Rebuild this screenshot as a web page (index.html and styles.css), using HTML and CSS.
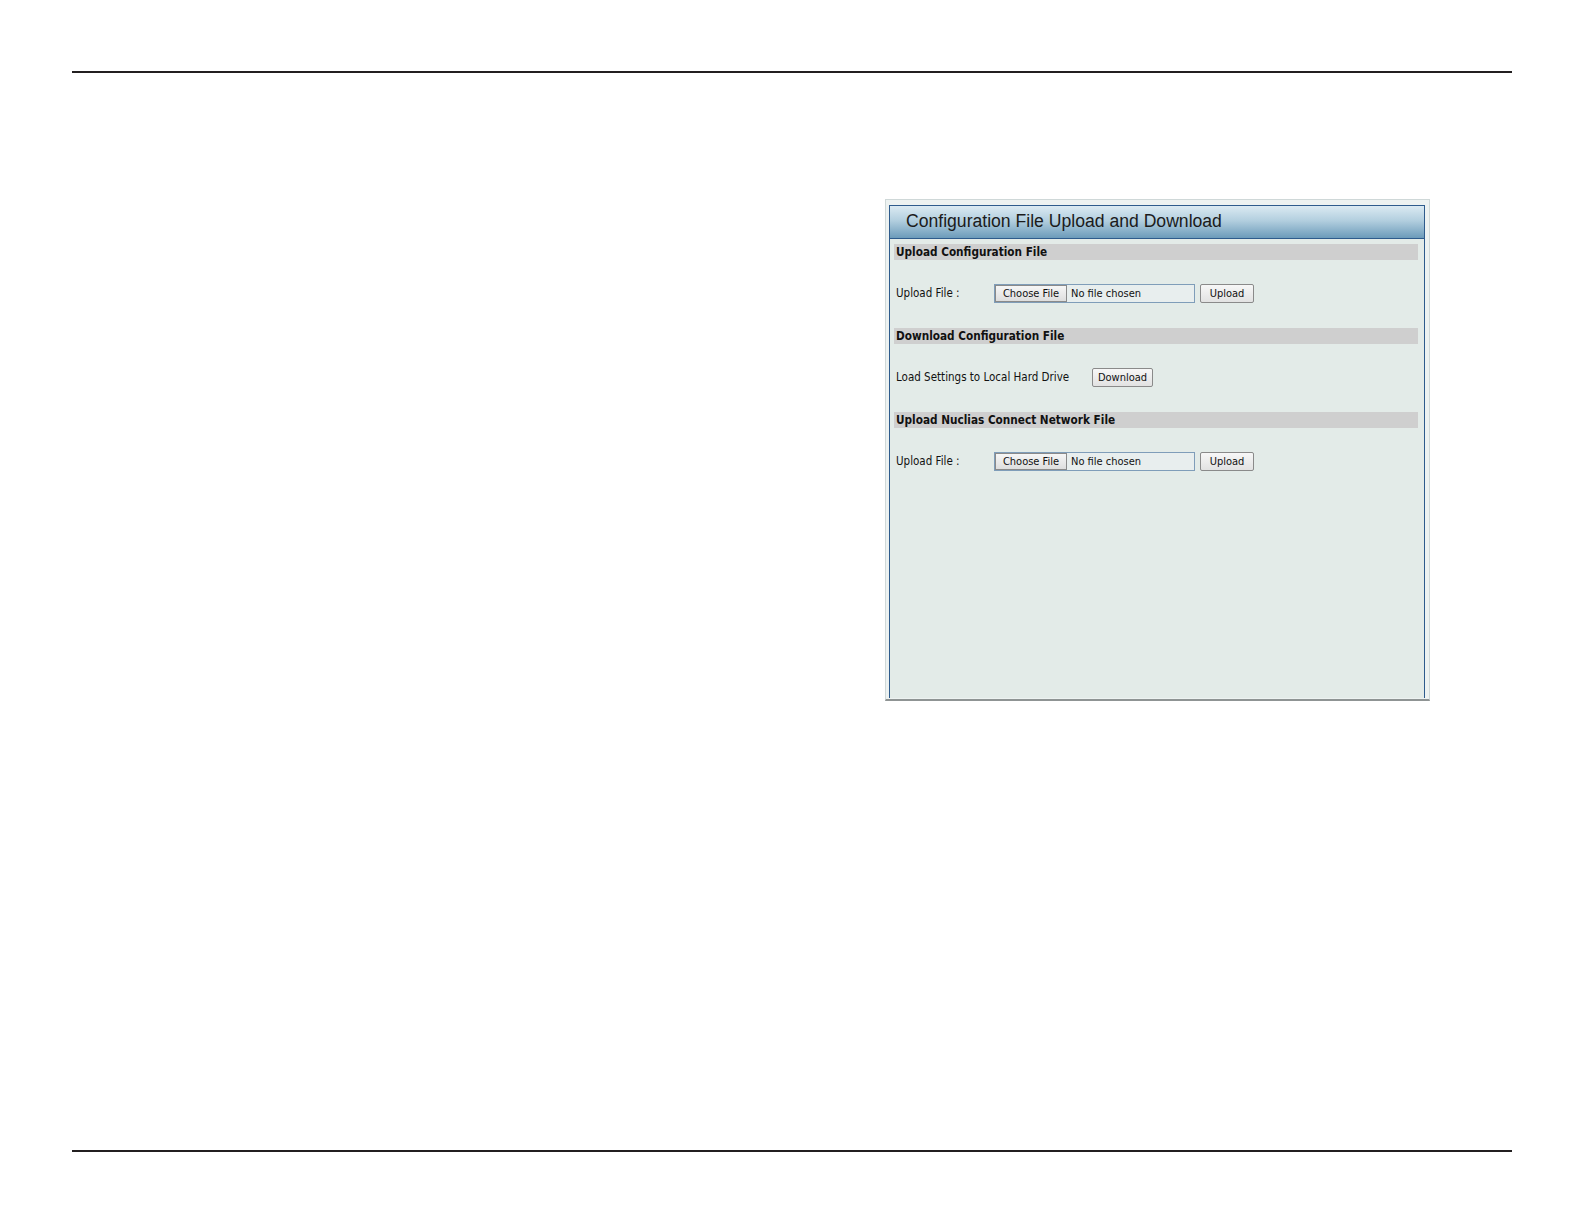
FILE: index.html
```html
<!doctype html>
<html>
	<head>
		<meta charset="utf-8">
		<link rel="stylesheet" href="styles.css">
	</head>
	<body>
		<div class="page">
			<div class="rule"></div>

			<div class="figure">
				<div class="panel">
					<div class="panel-title">Configuration File Upload and Download</div>
					<div class="panel-body">

						<div class="section-head">Upload Configuration File</div>
						<div class="row">
							<span class="label">Upload File :</span>
							<span class="file-box">
								<span class="file-btn">Choose File</span>
								<span class="file-name">No file chosen</span>
							</span>
							<button class="btn btn-upload">Upload</button>
						</div>

						<div class="section-head">Download Configuration File</div>
						<div class="row">
							<span class="label label-wide">Load Settings to Local Hard Drive</span>
							<button class="btn btn-download">Download</button>
						</div>

						<div class="section-head">Upload Nuclias Connect Network File</div>
						<div class="row">
							<span class="label">Upload File :</span>
							<span class="file-box">
								<span class="file-btn">Choose File</span>
								<span class="file-name">No file chosen</span>
							</span>
							<button class="btn btn-upload">Upload</button>
						</div>

					</div>
				</div>
			</div>

			<div class="rule rule-bottom"></div>
		</div>
	</body>
</html>
```

FILE: styles.css
```css
body {
	margin: 0;
	background: #fff;
	font-family: "DejaVu Sans Condensed", "DejaVu Sans", sans-serif;
	font-size: 11.5px;
	color: #111;
}

.page {
	padding-top: 71px;
}

.rule {
	height: 2px;
	margin: 0 72px;
	background: #231f20;
}

.rule-bottom {
	margin-top: 449px;
}

.figure {
	box-sizing: border-box;
	width: 545px;
	height: 502px;
	margin: 126px 0 0 885px;
	padding: 5px 4px 1px 3px;
	border: 1px solid #cfd8d8;
	border-bottom: 2px solid #8f9494;
	background: #edf2f1;
}

.panel {
	box-sizing: border-box;
	height: 100%;
	border: 1px solid #2e5b8c;
	border-bottom: none;
	background: #e3ebe8;
}

.panel-title {
	height: 32px;
	padding-left: 16px;
	line-height: 31px;
	border-bottom: 1px solid #2e5b8c;
	background: linear-gradient(#dbeaf2, #b3cfdf 45%, #6c9bba);
	font-family: "Liberation Sans", Arial, sans-serif;
	font-size: 17.6px;
	color: #1b1b1b;
}

.panel-body {
	padding: 5px 6px 0 4px;
}

.section-head {
	height: 16px;
	padding-left: 2px;
	line-height: 16px;
	background: #cfcfcf;
	font-size: 11.7px;
	font-weight: bold;
}

.row {
	display: flex;
	align-items: center;
	height: 20px;
	margin: 23px 0 25px;
	padding-left: 2px;
}

.label {
	width: 98px;
}

.label-wide {
	width: 196px;
}

.file-box {
	display: flex;
	align-items: center;
	box-sizing: border-box;
	width: 201px;
	height: 19px;
	border: 1px solid #7f9db9;
	background: #e8eeee;
}

.file-btn {
	box-sizing: border-box;
	width: 72px;
	height: 17px;
	line-height: 15px;
	text-align: center;
	border: 1px solid #8a8a8a;
	background: linear-gradient(#f6f6f6, #dedede);
	font-size: 11px;
}

.file-name {
	padding-left: 4px;
	font-size: 11px;
}

.btn {
	box-sizing: border-box;
	height: 19px;
	padding: 0;
	border: 1px solid #8a8a8a;
	border-radius: 2px;
	background: linear-gradient(#f7f7f7, #e2e2e2);
	font-family: inherit;
	font-size: 11px;
	color: #111;
}

.btn-upload {
	width: 54px;
	margin-left: 5px;
}

.btn-download {
	width: 61px;
}
```
